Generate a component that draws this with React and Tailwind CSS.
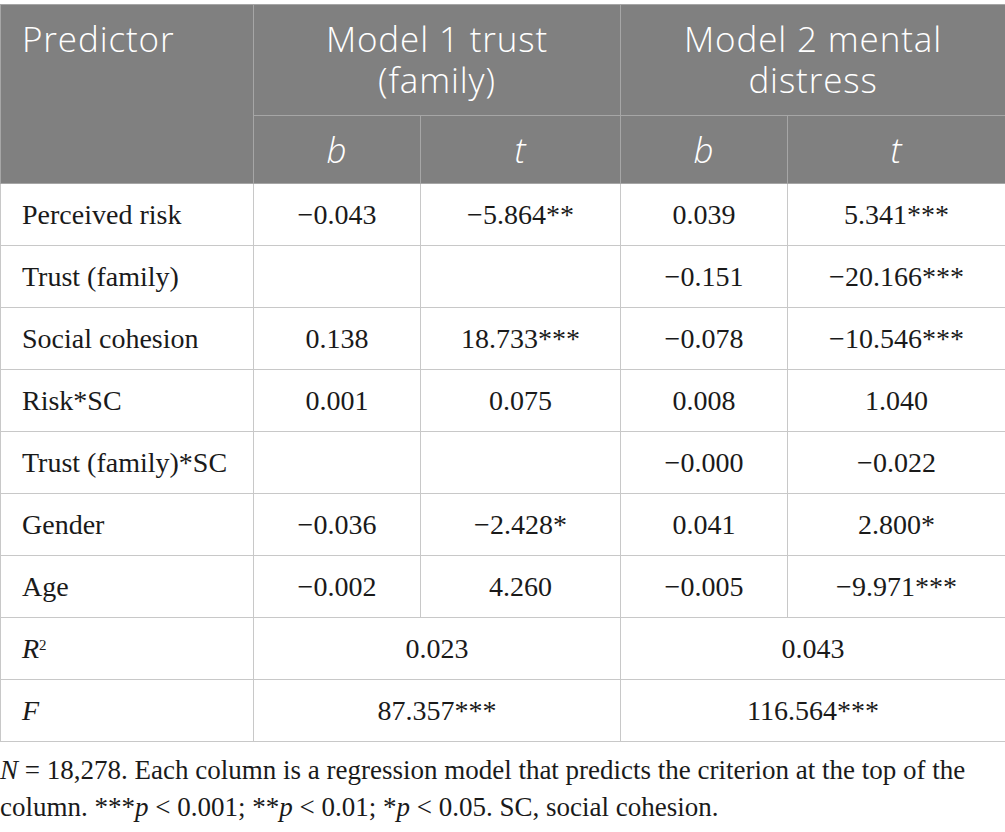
const rows = [
  ["Perceived risk", "−0.043", "−5.864**", "0.039", "5.341***"],
  ["Trust (family)", "", "", "−0.151", "−20.166***"],
  ["Social cohesion", "0.138", "18.733***", "−0.078", "−10.546***"],
  ["Risk*SC", "0.001", "0.075", "0.008", "1.040"],
  ["Trust (family)*SC", "", "", "−0.000", "−0.022"],
  ["Gender", "−0.036", "−2.428*", "0.041", "2.800*"],
  ["Age", "−0.002", "4.260", "−0.005", "−9.971***"],
];

const serif = "font-['Minion_Pro','Liberation_Serif',serif]";

export default function App() {
  return (
    <div className="w-[1005px] h-[832px] bg-white pt-[4px]">
      <table className="w-[1005px] table-fixed border-collapse text-[#1a1a1a]">
        <colgroup>
          <col className="w-[253px]" />
          <col className="w-[167px]" />
          <col className="w-[200px]" />
          <col className="w-[167px]" />
          <col className="w-[218px]" />
        </colgroup>
        <thead className="bg-[#808080] text-white font-['Open_Sans',sans-serif] font-light text-[35px] leading-[41px] tracking-[0.025em]">
          <tr className="h-[111px]">
            <th rowSpan={2} className="border border-[#a6a6a6] align-top text-left font-light pl-[21px] pt-[13px]">
              Predictor
            </th>
            <th colSpan={2} className="border border-[#a6a6a6] align-top text-center font-light pt-[13px]">
              Model 1 trust
              <br />
              (family)
            </th>
            <th colSpan={2} className="border border-[#a6a6a6] align-top text-center font-light pt-[13px]">
              Model 2 mental
              <br />
              distress
            </th>
          </tr>
          <tr className="h-[68px]">
            <th className="border border-[#a6a6a6] italic font-light">b</th>
            <th className="border border-[#a6a6a6] italic font-light">t</th>
            <th className="border border-[#a6a6a6] italic font-light">b</th>
            <th className="border border-[#a6a6a6] italic font-light">t</th>
          </tr>
        </thead>
        <tbody className={`${serif} text-[28px]`}>
          {rows.map((r) => (
            <tr key={r[0]} className="h-[62px]">
              <td className="border border-[#c8c8c8] pl-[21px]">{r[0]}</td>
              {r.slice(1).map((c, i) => (
                <td key={i} className="border border-[#c8c8c8] text-center">
                  {c}
                </td>
              ))}
            </tr>
          ))}
          <tr className="h-[62px]">
            <td className="border border-[#c8c8c8] pl-[21px] italic">
              R<sup className="text-[15px] not-italic">2</sup>
            </td>
            <td colSpan={2} className="border border-[#c8c8c8] text-center">0.023</td>
            <td colSpan={2} className="border border-[#c8c8c8] text-center">0.043</td>
          </tr>
          <tr className="h-[62px]">
            <td className="border border-[#c8c8c8] pl-[21px] italic">F</td>
            <td colSpan={2} className="border border-[#c8c8c8] text-center">87.357***</td>
            <td colSpan={2} className="border border-[#c8c8c8] text-center">116.564***</td>
          </tr>
        </tbody>
      </table>
      <p className={`${serif} text-[27px] leading-[37px] text-[#1a1a1a] pt-[10px] pr-[20px]`}>
        <i>N</i> = 18,278. Each column is a regression model that predicts the criterion at the top of the
        column. ***<i>p</i> &lt; 0.001; **<i>p</i> &lt; 0.01; *<i>p</i> &lt; 0.05. SC, social cohesion.
      </p>
    </div>
  );
}
